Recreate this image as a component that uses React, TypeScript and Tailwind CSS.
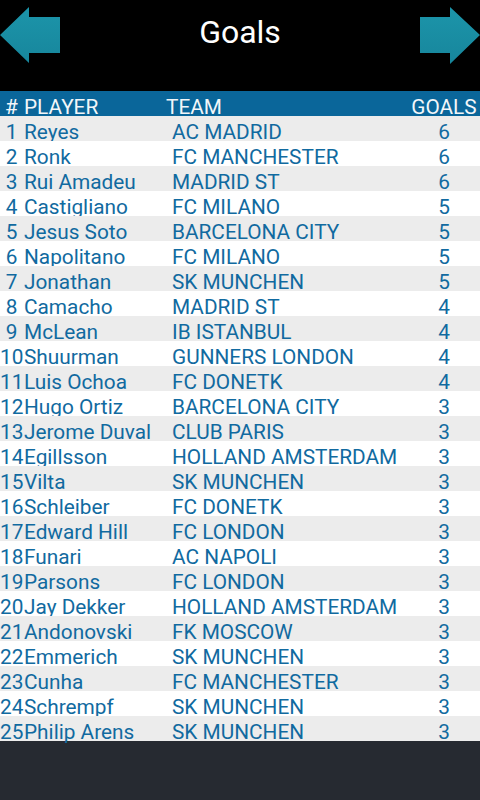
import React from "react";

const rows: [number, string, string, number][] = [
  [1, "Reyes", "AC MADRID", 6],
  [2, "Ronk", "FC MANCHESTER", 6],
  [3, "Rui Amadeu", "MADRID ST", 6],
  [4, "Castigliano", "FC MILANO", 5],
  [5, "Jesus Soto", "BARCELONA CITY", 5],
  [6, "Napolitano", "FC MILANO", 5],
  [7, "Jonathan", "SK MUNCHEN", 5],
  [8, "Camacho", "MADRID ST", 4],
  [9, "McLean", "IB ISTANBUL", 4],
  [10, "Shuurman", "GUNNERS LONDON", 4],
  [11, "Luis Ochoa", "FC DONETK", 4],
  [12, "Hugo Ortiz", "BARCELONA CITY", 3],
  [13, "Jerome Duval", "CLUB PARIS", 3],
  [14, "Egillsson", "HOLLAND AMSTERDAM", 3],
  [15, "Vilta", "SK MUNCHEN", 3],
  [16, "Schleiber", "FC DONETK", 3],
  [17, "Edward Hill", "FC LONDON", 3],
  [18, "Funari", "AC NAPOLI", 3],
  [19, "Parsons", "FC LONDON", 3],
  [20, "Jay Dekker", "HOLLAND AMSTERDAM", 3],
  [21, "Andonovski", "FK MOSCOW", 3],
  [22, "Emmerich", "SK MUNCHEN", 3],
  [23, "Cunha", "FC MANCHESTER", 3],
  [24, "Schrempf", "SK MUNCHEN", 3],
  [25, "Philip Arens", "SK MUNCHEN", 3],
];

function LeftArrow() {
  return (
    <svg width="60" height="70" viewBox="0 0 60 70" className="block">
      <defs>
        <linearGradient id="ga" x1="0" y1="0" x2="0" y2="1">
          <stop offset="0" stopColor="#1c95aa" />
          <stop offset="1" stopColor="#17869c" />
        </linearGradient>
      </defs>
      <polygon points="0,35 29,7 29,17 60,17 60,53 29,53 29,63" fill="url(#ga)" />
    </svg>
  );
}

function RightArrow() {
  return (
    <svg width="60" height="70" viewBox="0 0 60 70" className="block">
      <defs>
        <linearGradient id="gb" x1="0" y1="0" x2="0" y2="1">
          <stop offset="0" stopColor="#1c95aa" />
          <stop offset="1" stopColor="#17869c" />
        </linearGradient>
      </defs>
      <polygon points="0,17 30,17 30,7 60,35 30,64 30,53 0,53" fill="url(#gb)" />
    </svg>
  );
}

export default function App() {
  return (
    <div
      className="w-[480px] h-[800px] bg-[#262a31] flex flex-col overflow-hidden"
      style={{ fontFamily: "Roboto, 'Noto Sans', sans-serif" }}
    >
      <div className="h-[91px] bg-black flex items-start justify-between">
        <LeftArrow />
        <div className="flex-1 text-center text-white text-[32px] leading-[32px] pt-[16px]">Goals</div>
        <RightArrow />
      </div>
      <div className="h-[25px] bg-[#0a669a] flex text-[#f2f6f9] text-[20.8px] leading-[18px] pt-[7px] whitespace-nowrap">
        <div className="w-[23px] text-center">#</div>
        <div className="w-[143px] pl-[1px]">PLAYER</div>
        <div className="flex-1">TEAM</div>
        <div className="w-[72px] text-center">GOALS</div>
      </div>
      {rows.map(([n, p, t, g]) => (
        <div
          key={n}
          className={`h-[25px] flex text-[#116aa0] text-[20.8px] leading-[18px] pt-[7px] whitespace-nowrap ${
            n % 2 === 1 ? "bg-[#ececec]" : "bg-white"
          }`}
        >
          <div className="w-[23px] text-center">{n}</div>
          <div className="w-[149px] pl-[1px]">{p}</div>
          <div className="flex-1">{t}</div>
          <div className="w-[72px] text-center">{g}</div>
        </div>
      ))}
    </div>
  );
}
